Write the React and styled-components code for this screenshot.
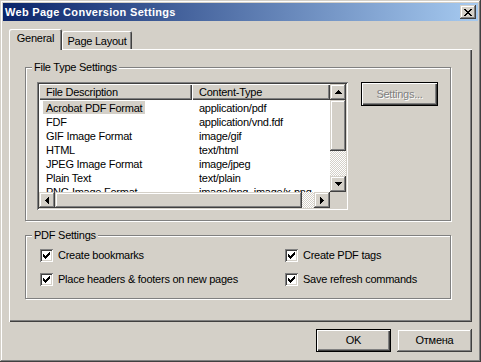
import React from 'react';
import styled, { createGlobalStyle } from 'styled-components';

const FACE = '#D4D0C8';
const LIGHT = '#FFFFFF';
const SHADOW = '#808080';
const DARK = '#404040';

const GlobalStyle = createGlobalStyle`
  html, body { margin: 0; padding: 0; background: ${FACE}; }
  body {
    font-family: "Liberation Sans", Arial, sans-serif;
    font-size: 11px;
    letter-spacing: -0.25px;
    color: #000;
  }
  * { box-sizing: border-box; }
`;

const raisedShadow = `inset -1px -1px ${DARK}, inset 1px 1px ${FACE}, inset -2px -2px ${SHADOW}, inset 2px 2px ${LIGHT}`;
const sunkenShadow = `inset 1px 1px ${SHADOW}, inset -1px -1px ${LIGHT}, inset 2px 2px ${DARK}, inset -2px -2px ${FACE}`;

const Window = styled.div`
  width: 481px;
  height: 362px;
  padding: 3px;
  background: ${FACE};
  box-shadow: ${raisedShadow};
  display: flex;
  flex-direction: column;
`;

const TitleBar = styled.div`
  height: 18px;
  flex: none;
  display: flex;
  align-items: center;
  padding: 0 2px;
  background: linear-gradient(to right, #0A246A, #A6CAF0);
  color: #fff;
  font-weight: bold;
  letter-spacing: 0.3px;
`;

const TitleText = styled.span`
  line-height: 13px;
`;

const CloseButton = styled.div`
  margin-left: auto;
  width: 16px;
  height: 14px;
  background: ${FACE};
  box-shadow: ${raisedShadow};
  display: flex;
  align-items: center;
  justify-content: center;
  padding-right: 1px;
`;

const Body = styled.div`
  flex: 1;
  display: flex;
  flex-direction: column;
  padding: 8px 6px 7px 6px;
`;

const TabStrip = styled.div`
  height: 20px;
  flex: none;
  display: flex;
  align-items: flex-end;
`;

const Tab = styled.div`
  position: relative;
  z-index: ${(p) => (p.$active ? 1 : 0)};
  width: ${(p) => p.$w}px;
  height: ${(p) => (p.$active ? 21 : 18)}px;
  margin-bottom: ${(p) => (p.$active ? -1 : 0)}px;
  padding-top: ${(p) => (p.$active ? 3 : 4)}px;
  text-align: center;
  line-height: 13px;
  background: ${FACE};
  border-radius: 2px 2px 0 0;
  box-shadow: inset 1px 1px ${LIGHT}, inset -1px 0 ${DARK}, inset -2px 0 ${SHADOW};
`;

const Panel = styled.div`
  height: 273px;
  flex: none;
  display: flex;
  flex-direction: column;
  padding: 18px 0 0 16px;
  box-shadow: inset 1px 1px ${LIGHT}, inset -1px -1px ${DARK}, inset -2px -2px ${SHADOW};
`;

const GroupBox = styled.div`
  position: relative;
  width: 426px;
  height: ${(p) => p.$h}px;
  margin-top: ${(p) => p.$mt || 0}px;
  border: 1px solid ${SHADOW};
  box-shadow: inset 1px 1px ${LIGHT}, 1px 1px ${LIGHT};
`;

const Legend = styled.span`
  position: absolute;
  top: -7px;
  left: 6px;
  padding: 0 2px;
  line-height: 13px;
  background: ${FACE};
`;

const FileTypeContent = styled.div`
  display: flex;
  align-items: flex-start;
  gap: 13px;
  padding: 14px 0 0 11px;
`;

const ListView = styled.div`
  width: 311px;
  height: 128px;
  padding: 2px;
  box-shadow: ${sunkenShadow};
  display: grid;
  grid-template-columns: 1fr 16px;
  grid-template-rows: 1fr 16px;
  background: #fff;
`;

const ListMain = styled.div`
  overflow: hidden;
  background: #fff;
  display: flex;
  flex-direction: column;
`;

const HeaderRow = styled.div`
  display: grid;
  grid-template-columns: 153px 1fr;
  height: 16px;
  flex: none;
`;

const HeaderCell = styled.div`
  background: ${FACE};
  box-shadow: inset 1px 1px ${LIGHT}, inset -1px -1px ${DARK}, inset -2px -2px ${SHADOW};
  padding: 1px 0 0 7px;
  line-height: 14px;
  white-space: nowrap;
  overflow: hidden;
`;

const Row = styled.div`
  display: grid;
  grid-template-columns: 153px 1fr;
  height: 14px;
  flex: none;
  white-space: nowrap;
`;

const DescCell = styled.div`
  padding: 1px 0 0 4px;
  overflow: hidden;
`;

const DescText = styled.span`
  display: inline-block;
  height: 13px;
  padding: 0 3px;
  line-height: 14px;
  background: ${(p) => (p.$selected ? FACE : 'transparent')};
`;

const TypeCell = styled.div`
  padding: 1px 0 0 7px;
  line-height: 14px;
  overflow: hidden;
`;

const VScroll = styled.div`
  display: flex;
  flex-direction: column;
`;

const HScroll = styled.div`
  display: flex;
`;

const ScrollButton = styled.div`
  width: 16px;
  height: 16px;
  flex: none;
  background: ${FACE};
  box-shadow: ${raisedShadow};
  display: flex;
  align-items: center;
  justify-content: center;
`;

const Thumb = styled.div`
  flex: none;
  width: ${(p) => (p.$horizontal ? `${p.$size}px` : '16px')};
  height: ${(p) => (p.$horizontal ? '16px' : `${p.$size}px`)};
  background: ${FACE};
  box-shadow: ${raisedShadow};
`;

const Track = styled.div`
  flex: 1;
  background-image: conic-gradient(${LIGHT} 25%, ${FACE} 0 50%, ${LIGHT} 0 75%, ${FACE} 0);
  background-size: 2px 2px;
`;

const Corner = styled.div`
  background: ${FACE};
`;

const PushButton = styled.div`
  width: ${(p) => p.$w || 75}px;
  height: ${(p) => p.$h || 23}px;
  flex: none;
  display: flex;
  align-items: center;
  justify-content: center;
  background: ${FACE};
  border: ${(p) => (p.$default ? '1px solid #000' : 'none')};
  box-shadow: ${(p) =>
    p.$default
      ? `inset 1px 1px ${LIGHT}, inset -1px -1px ${DARK}, inset -2px -2px ${SHADOW}`
      : raisedShadow};
  color: ${(p) => (p.$disabled ? SHADOW : '#000')};
  text-shadow: ${(p) => (p.$disabled ? `1px 1px ${LIGHT}` : 'none')};
  line-height: 13px;
`;

const PdfContent = styled.div`
  display: grid;
  grid-template-columns: 245px 1fr;
  row-gap: 11px;
  padding: 13px 0 0 14px;
`;

const CheckRow = styled.label`
  display: flex;
  align-items: center;
  gap: 5px;
  height: 13px;
  line-height: 13px;
  white-space: nowrap;
`;

const CheckBox = styled.span`
  width: 13px;
  height: 13px;
  flex: none;
  background: #fff;
  box-shadow: ${sunkenShadow};
  display: flex;
  align-items: center;
  justify-content: center;
`;

const ButtonRow = styled.div`
  display: flex;
  justify-content: flex-end;
  gap: 6px;
  margin-top: 7px;
`;

const arrowPaths = {
  up: 'M3 0h1v1h-1zM2 1h3v1h-3zM1 2h5v1h-5zM0 3h7v1h-7z',
  down: 'M0 0h7v1h-7zM1 1h5v1h-5zM2 2h3v1h-3zM3 3h1v1h-1z',
  left: 'M3 0h1v7h-1zM2 1h1v5h-1zM1 2h1v3h-1zM0 3h1v1h-1z',
  right: 'M0 0h1v7h-1zM1 1h1v5h-1zM2 2h1v3h-1zM3 3h1v1h-1z',
};

const Arrow = ({ dir }) => {
  const vertical = dir === 'up' || dir === 'down';
  const w = vertical ? 7 : 4;
  const h = vertical ? 4 : 7;
  return (
    <svg width={w} height={h} viewBox={`0 0 ${w} ${h}`} shapeRendering="crispEdges">
      <path d={arrowPaths[dir]} fill="#000" />
    </svg>
  );
};

const CloseGlyph = () => (
  <svg width="8" height="7" viewBox="0 0 8 7" shapeRendering="crispEdges">
    <path
      d="M0 0h2v1h-2zM6 0h2v1h-2zM1 1h2v1h-2zM5 1h2v1h-2zM2 2h4v1h-4zM3 3h2v1h-2zM2 4h4v1h-4zM1 5h2v1h-2zM5 5h2v1h-2zM0 6h2v1h-2zM6 6h2v1h-2z"
      fill="#000"
    />
  </svg>
);

const CheckGlyph = () => (
  <svg width="7" height="7" viewBox="0 0 7 7" shapeRendering="crispEdges">
    <path
      d="M6 0h1v1h-1zM5 1h2v1h-2zM0 2h1v1h-1zM4 2h3v1h-3zM0 3h2v1h-2zM3 3h3v1h-3zM0 4h5v1h-5zM1 5h3v1h-3zM2 6h1v1h-1z"
      fill="#000"
    />
  </svg>
);

const Check = ({ label }) => (
  <CheckRow>
    <CheckBox>
      <CheckGlyph />
    </CheckBox>
    <span>{label}</span>
  </CheckRow>
);

const fileTypes = [
  ['Acrobat PDF Format', 'application/pdf', true],
  ['FDF', 'application/vnd.fdf'],
  ['GIF Image Format', 'image/gif'],
  ['HTML', 'text/html'],
  ['JPEG Image Format', 'image/jpeg'],
  ['Plain Text', 'text/plain'],
  ['PNG Image Format', 'image/png, image/x-png'],
];

export default function App() {
  return (
    <>
      <GlobalStyle />
      <Window>
        <TitleBar>
          <TitleText>Web Page Conversion Settings</TitleText>
          <CloseButton>
            <CloseGlyph />
          </CloseButton>
        </TitleBar>
        <Body>
          <TabStrip>
            <Tab $active $w={53}>General</Tab>
            <Tab $w={70}>Page Layout</Tab>
          </TabStrip>
          <Panel>
            <GroupBox $h={154}>
              <Legend>File Type Settings</Legend>
              <FileTypeContent>
                <ListView>
                  <ListMain>
                    <HeaderRow>
                      <HeaderCell>File Description</HeaderCell>
                      <HeaderCell>Content-Type</HeaderCell>
                    </HeaderRow>
                    {fileTypes.map(([desc, type, sel]) => (
                      <Row key={desc}>
                        <DescCell>
                          <DescText $selected={sel}>{desc}</DescText>
                        </DescCell>
                        <TypeCell>{type}</TypeCell>
                      </Row>
                    ))}
                  </ListMain>
                  <VScroll>
                    <ScrollButton><Arrow dir="up" /></ScrollButton>
                    <Thumb $size={51} />
                    <Track />
                    <ScrollButton><Arrow dir="down" /></ScrollButton>
                  </VScroll>
                  <HScroll>
                    <ScrollButton><Arrow dir="left" /></ScrollButton>
                    <Thumb $horizontal $size={247} />
                    <Track />
                    <ScrollButton><Arrow dir="right" /></ScrollButton>
                  </HScroll>
                  <Corner />
                </ListView>
                <PushButton $default $disabled $w={77} $h={24}>Settings...</PushButton>
              </FileTypeContent>
            </GroupBox>
            <GroupBox $h={64} $mt={14}>
              <Legend>PDF Settings</Legend>
              <PdfContent>
                <Check label="Create bookmarks" />
                <Check label="Create PDF tags" />
                <Check label="Place headers & footers on new pages" />
                <Check label="Save refresh commands" />
              </PdfContent>
            </GroupBox>
          </Panel>
          <ButtonRow>
            <PushButton $default>OK</PushButton>
            <PushButton>Отмена</PushButton>
          </ButtonRow>
        </Body>
      </Window>
    </>
  );
}
